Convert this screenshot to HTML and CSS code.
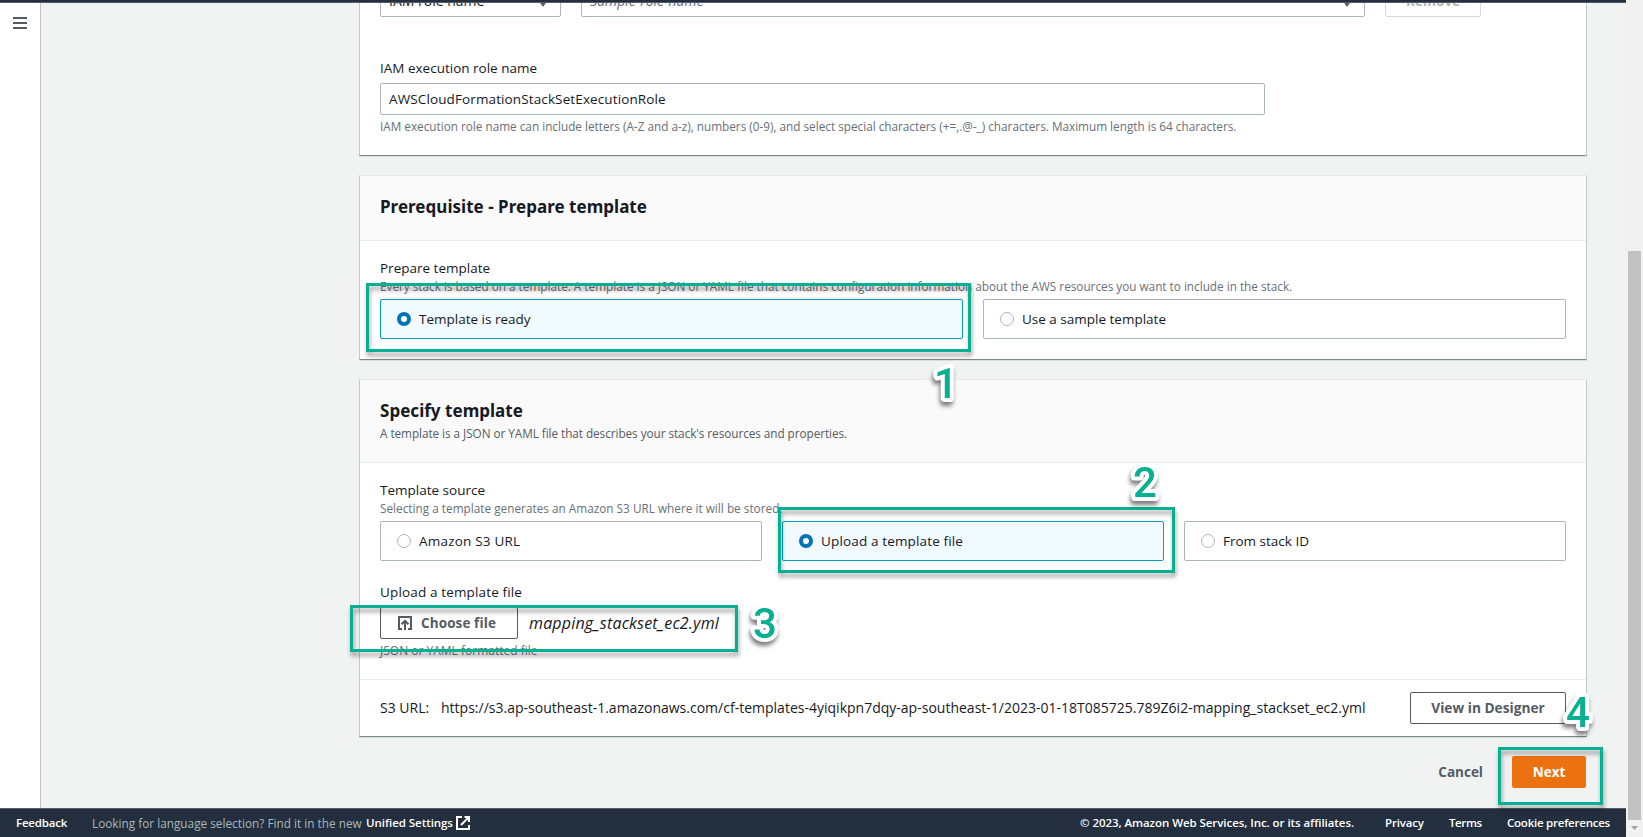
FILE: index.html
```
<!DOCTYPE html>
<html lang="en">
<head>
<meta charset="utf-8">
<title>Create StackSet</title>
<link rel="stylesheet" href="styles.css">
</head>
<body>
<div class="window">
  <div class="app">
    <div class="topbar"></div>
    <div class="middle">
      <nav class="sidebar">
        <svg class="menu-icon" width="14" height="12" viewBox="0 0 14 12"><path d="M0 1h14M0 6h14M0 11h14" stroke="#545b64" stroke-width="2"/></svg>
      </nav>
      <main class="content">
        <section class="card card-first">
          <div class="condition-row">
            <div class="control select select-key"><span>IAM role name</span><svg width="10" height="7" viewBox="0 0 10 7"><path d="M0 0h10L5 7z" fill="#545b64"/></svg></div>
            <div class="control select select-value"><em>Sample-role-name</em><svg width="10" height="7" viewBox="0 0 10 7"><path d="M0 0h10L5 7z" fill="#545b64"/></svg></div>
            <div class="btn btn-disabled">Remove</div>
          </div>
          <div class="label label-role">IAM execution role name</div>
          <div class="control text-input">AWSCloudFormationStackSetExecutionRole</div>
          <div class="help">IAM execution role name can include letters (A-Z and a-z), numbers (0-9), and select special characters (+=,.@-_) characters. Maximum length is 64 characters.</div>
        </section>

        <section class="card">
          <header class="card-header"><h2>Prerequisite - Prepare template</h2></header>
          <div class="card-body prepare-body">
            <div class="label">Prepare template</div>
            <div class="desc">Every stack is based on a template. A template is a JSON or YAML file that contains configuration information about the AWS resources you want to include in the stack.</div>
            <div class="tiles two">
              <div class="tile selected"><i class="radio"></i>Template is ready</div>
              <div class="tile"><i class="radio"></i>Use a sample template</div>
            </div>
          </div>
        </section>

        <section class="card">
          <header class="card-header tall"><h2>Specify template</h2><p class="header-desc">A template is a JSON or YAML file that describes your stack's resources and properties.</p></header>
          <div class="card-body source-body">
            <div class="label">Template source</div>
            <div class="desc desc-source">Selecting a template generates an Amazon S3 URL where it will be stored.</div>
            <div class="tiles three">
              <div class="tile s3-tile"><i class="radio"></i>Amazon S3 URL</div>
              <div class="tile selected wide-text"><i class="radio"></i>Upload a template file</div>
              <div class="tile"><i class="radio"></i>From stack ID</div>
            </div>
            <div class="label label-upload">Upload a template file</div>
            <div class="file-row">
              <div class="btn btn-file"><svg width="14" height="14" viewBox="0 0 14 14"><path d="M4 13H1V1h12v12h-3M7 14V5M3.5 8.3L7 4.8l3.5 3.5" fill="none" stroke="#545b64" stroke-width="2"/></svg>Choose file</div>
              <em class="file-name">mapping_stackset_ec2.yml</em>
            </div>
            <div class="help help-file">JSON or YAML formatted file</div>
          </div>
          <footer class="card-footer">
            <span class="s3-label">S3 URL:</span>
            <span class="s3-url">https://s3.ap-southeast-1.amazonaws.com/cf-templates-4yiqikpn7dqy-ap-southeast-1/2023-01-18T085725.789Z6i2-mapping_stackset_ec2.yml</span>
            <div class="btn btn-designer">View in Designer</div>
          </footer>
        </section>

        <div class="actions">
          <span class="cancel">Cancel</span>
          <div class="btn btn-next">Next</div>
        </div>
      </main>
    </div>
    <footer class="footer">
      <b class="feedback">Feedback</b>
      <span class="language">Looking for language selection? Find it in the new</span>
      <b class="unified">Unified Settings</b>
      <svg class="external" width="14" height="14" viewBox="0 0 14 14"><path d="M6 1H1v12h12V9M8.5 1H13v5M12.6 1.4L5 9" fill="none" stroke="#fff" stroke-width="2"/></svg>
      <b class="copyright">© 2023, Amazon Web Services, Inc. or its affiliates.</b>
      <b class="privacy">Privacy</b>
      <b class="terms">Terms</b>
      <b class="cookies">Cookie preferences</b>
    </footer>
  </div>
  <div class="scrollbar">
    <div class="thumb"></div>
    <svg width="7" height="4" viewBox="0 0 7 4"><path d="M0 0h7L3.5 4z" fill="#a3a3a3"/></svg>
  </div>
  <div class="mark mark-1"></div>
  <div class="mark mark-2"></div>
  <div class="mark mark-3"></div>
  <div class="mark mark-4"></div>
  <svg class="steps" width="1643" height="837">
    <text x="934" y="398">1</text>
    <text x="1133" y="497">2</text>
    <text x="753" y="638">3</text>
    <text x="1566" y="727">4</text>
  </svg>
</div>
</body>
</html>
```

FILE: styles.css
```
* { box-sizing: border-box; }
body {
  margin: 0;
  font: 13.5px/20px "Open Sans", "Noto Sans", sans-serif;
  color: #16191f;
  background: #f1f3f3;
}
h2, p { margin: 0; }
.window { position: relative; display: flex; width: 1643px; height: 837px; overflow: hidden; }
.app { display: flex; flex-direction: column; width: 1626px; }
.topbar { height: 3px; background: #232f3e; border-bottom: 1px solid #545b64; }
.middle { display: flex; flex: 1; min-height: 0; }
.sidebar { width: 41px; padding: 14px 0 0 13px; background: #fff; border-right: 1px solid #bcc3c3; }
.menu-icon { display: block; }
.content { flex: 1; padding: 0 39px 0 318px; }

.card {
  margin-bottom: 19px;
  background: #fff;
  border: 1px solid #c3c9c9;
  border-top-color: #e6eaea;
  border-bottom-color: #7b8989;
  box-shadow: 0 1px 0 rgba(0, 28, 36, .1);
}
.card-first { border-top: 0; padding: 0 20px 20px; height: 153px; }
.condition-row { display: flex; align-items: flex-end; height: 14px; overflow: hidden; }
.control { display: flex; align-items: center; height: 32px; border: 1px solid #aab7b8; border-radius: 2px; background: #fff; flex: none; }
.select { justify-content: space-between; padding: 0 12px 0 8px; font-size: 14px; }
.select svg { margin-top: 4px; }
.select-key { width: 181px; margin-right: 20px; }
.select-value { width: 784px; margin-right: 20px; }
.select-value em { color: #687078; }
.text-input { width: 885px; margin-top: 4px; padding: 0 8px; letter-spacing: .12px; }
.label { height: 20px; }
.label-role { margin-top: 41px; margin-bottom: 5px; }
.prepare-body .label, .label-upload { line-height: 18px; }
.help, .desc, .header-desc { font-size: 11.75px; line-height: 16px; color: #687078; white-space: nowrap; }
.help { margin-top: 3px; }
.desc, .header-desc { line-height: 14px; padding-bottom: 2px; }
.help-file { margin-top: 4px; font-size: 12px; }

.card-header { height: 65px; padding: 20px 20px 0; background: #fafafa; border-bottom: 1px solid #eaeded; }
.card-header.tall { height: 83px; }
h2 { font: 700 17px/22px "Noto Sans", sans-serif; letter-spacing: .03px; }
.header-desc { margin-top: 4px; letter-spacing: -.05px; color: #545b64; }
.card-body { padding: 18px 20px 20px; }
.source-body { padding-top: 17px; }
.desc-source { margin-top: 1px; letter-spacing: .02px; }
.tiles { display: grid; gap: 20px; margin-top: 4px; }
.two { grid-template-columns: 1fr 1fr; }
.three { grid-template-columns: 1fr 1fr 1fr; }
.tile { display: flex; align-items: center; height: 40px; padding-left: 16px; border: 1px solid #aab7b8; border-radius: 2px; }
.tile.selected { background: #f1faff; border-color: #00a1c9; }
.wide-text { letter-spacing: .15px; }
.s3-tile { letter-spacing: .2px; }
.radio { width: 14px; height: 14px; margin-right: 8px; border: 1px solid #aab7b8; border-radius: 50%; background: #fff; }
.selected .radio { border: 4px solid #0073bb; }
.label-upload { margin-top: 22px; letter-spacing: .15px; }
.file-row { display: flex; align-items: center; margin-top: 4px; }

.btn { display: flex; align-items: center; justify-content: center; height: 32px; flex: none; border: 1px solid #545b64; border-radius: 2px; background: #fff; color: #545b64; font-weight: 700; }
.btn-disabled { width: 96px; border-color: #d5dbdb; color: #aab7b8; }
.btn-file { width: 138px; gap: 9px; padding-right: 4px; letter-spacing: .1px; }
.file-name { margin-left: 11px; padding-bottom: 1px; font-size: 16px; letter-spacing: .19px; }
.card-footer { display: flex; align-items: center; height: 57px; padding: 0 20px; border-top: 1px solid #eaeded; font-size: 14px; }
.s3-label { width: 61px; }
.s3-url { letter-spacing: .006px; }
.btn-designer { width: 156px; margin-left: auto; font-size: 13.7px; }
.actions { display: flex; align-items: center; justify-content: flex-end; padding-right: 1px; }
.cancel { margin-right: 29px; font-weight: 700; color: #545b64; }
.btn-next { width: 74px; border: 0; background: #ec7211; color: #fff; }

.footer { display: flex; align-items: center; height: 29px; padding: 0 16px 1px; background: #232f3e; border-top: 1px solid #545b64; color: #fff; font-size: 11.5px; line-height: 16px; white-space: nowrap; }
.footer b { font-weight: 600; }
.external { margin-top: 1px; }
.feedback { width: 76px; letter-spacing: -.2px; }
.language { width: 274px; font-size: 11.8px; color: #aab7b8; }
.unified { width: 90px; letter-spacing: -.05px; }
.copyright { margin-left: auto; width: 305px; letter-spacing: -.06px; }
.privacy { width: 64px; letter-spacing: -.15px; }
.terms { width: 58px; letter-spacing: -.4px; }
.cookies { width: 103px; letter-spacing: -.23px; }

.scrollbar { display: flex; flex-direction: column; align-items: center; width: 17px; padding: 251px 0 0; background: #f1f1f1; }
.thumb { width: 13px; height: 569px; margin: 0 0 6px; background: #c1c1c1; }

.mark { position: absolute; border: 3px solid #07b091; filter: drop-shadow(1px 4px 2px rgba(0, 0, 0, .38)); }
.mark-1 { left: 366px; top: 283px; width: 605px; height: 69px; }
.mark-2 { left: 778px; top: 507px; width: 397px; height: 66px; }
.mark-3 { left: 350px; top: 605px; width: 388px; height: 47px; }
.mark-4 { left: 1498px; top: 747px; width: 105px; height: 58px; }
.steps { position: absolute; left: 0; top: 0; filter: drop-shadow(-1px 4px 2px rgba(0, 0, 0, .5)); }
.steps text { font: 500 42px Roboto, "Liberation Sans", sans-serif; fill: #07b091; stroke: #fff; stroke-width: 8px; stroke-linejoin: round; paint-order: stroke; }
```
